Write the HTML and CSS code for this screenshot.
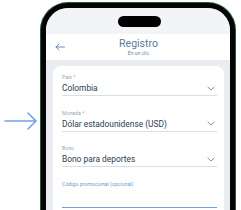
FILE: index.html
```html
<!DOCTYPE html>
<html>
<head>
<meta charset="utf-8">
<link rel="stylesheet" href="styles.css">
</head>
<body>
<div class="stage">
  <div class="pointer">
    <svg width="36" height="20" viewBox="0 0 36 20"><path d="M3 10 H34 M26 2 L34 10 L26 18" fill="none" stroke="#6fa3e3" stroke-width="1.6" stroke-linecap="round" stroke-linejoin="round"/></svg>
  </div>
  <div class="phone">
    <div class="screen">
      <div class="status"><div class="island"></div></div>
      <div class="header">
        <svg class="back" width="10" height="8" viewBox="0 0 10 8"><path d="M9.5 4 H1 M4 1 L1 4 L4 7" fill="none" stroke="#5b7fa6" stroke-width="0.9" stroke-linecap="round" stroke-linejoin="round"/></svg>
        <div class="titles">
          <div class="title">Registro</div>
          <div class="subtitle">En un clic</div>
        </div>
      </div>
      <div class="content">
        <div class="card">
          <div class="field">
            <div class="label">País *</div>
            <div class="value"><span>Colombia</span><svg class="chev" width="8" height="5" viewBox="0 0 8 5"><path d="M0.6 0.8 L4 4 L7.4 0.8" fill="none" stroke="#6b88a8" stroke-width="0.9"/></svg></div>
          </div>
          <div class="field">
            <div class="label">Moneda *</div>
            <div class="value"><span>Dólar estadounidense (USD)</span><svg class="chev" width="8" height="5" viewBox="0 0 8 5"><path d="M0.6 0.8 L4 4 L7.4 0.8" fill="none" stroke="#6b88a8" stroke-width="0.9"/></svg></div>
          </div>
          <div class="field">
            <div class="label">Bono</div>
            <div class="value"><span>Bono para deportes</span><svg class="chev" width="8" height="5" viewBox="0 0 8 5"><path d="M0.6 0.8 L4 4 L7.4 0.8" fill="none" stroke="#6b88a8" stroke-width="0.9"/></svg></div>
          </div>
          <div class="field active">
            <div class="label">Código promocional (opcional)</div>
            <div class="value"><span>&nbsp;</span></div>
          </div>
        </div>
      </div>
    </div>
  </div>
</div>
</body>
</html>
```
FILE: styles.css
```css
html, body {
  margin: 0;
  padding: 0;
  background: #ffffff;
  overflow: hidden;
  width: 241px;
  height: 210px;
  font-family: Roboto, "Liberation Sans", sans-serif;
}
.stage {
  display: flex;
  align-items: flex-start;
}
.pointer {
  width: 38px;
  padding-top: 111px;
  padding-left: 2px;
  display: flex;
}
.phone {
  margin-top: 3px;
  margin-left: 1px;
  width: 184px;
  height: 300px;
  border: 5px solid #050505;
  border-radius: 27px;
  box-shadow: 0 0 0 1px #1f5b35;
  overflow: hidden;
  background: #e9ecf1;
}
.screen {
  display: flex;
  flex-direction: column;
  border-radius: 22px;
  overflow: hidden;
  height: 100%;
}
.status {
  height: 26px;
  background: #f3f4f8;
  display: flex;
  justify-content: center;
  align-items: flex-start;
}
.island {
  margin-top: 8px;
  margin-left: 2px;
  width: 43px;
  height: 11px;
  border-radius: 6px;
  background: #000;
}
.header {
  height: 26px;
  background: #ffffff;
  position: relative;
  display: flex;
  justify-content: center;
  align-items: center;
}
.back {
  position: absolute;
  left: 9px;
  top: 9px;
}
.titles {
  text-align: center;
  margin-left: 1px;
}
.title {
  font-size: 10.5px;
  color: #5a7b9c;
  line-height: 11px;
}
.subtitle {
  font-size: 5px;
  color: #6d89a6;
  line-height: 7px;
  margin-top: 1px;
}
.content {
  padding: 6px 6px 0 7px;
  flex: 1;
}
.card {
  background: #ffffff;
  border-radius: 8px;
  padding: 7px 7px 0 9px;
  height: 200px;
}
.field {
  height: 35.5px;
}
.label {
  font-size: 5.2px;
  color: #9aa7b4;
  line-height: 6px;
  padding-top: 1px;
}
.value {
  display: flex;
  justify-content: space-between;
  align-items: center;
  font-size: 8.4px;
  color: #2b3d52;
  height: 14px;
  border-bottom: 1px solid #d6dee6;
  margin-top: 1px;
  padding-right: 1px;
}
.chev {
  margin-right: 1px;
}
.active .label {
  color: #6d9ad0;
}
.active .value {
  border-bottom: 1.5px solid #6e9fd8;
  margin-top: 6px;
}
```
